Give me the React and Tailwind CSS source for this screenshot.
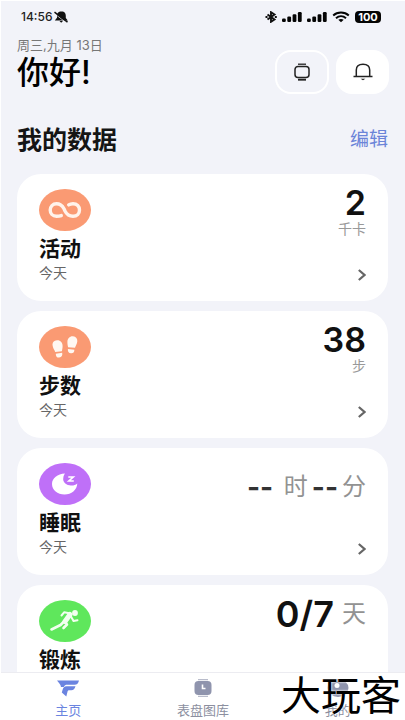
import React from 'react';

function MutedBell() {
  return (
    <svg className="h-3 w-4" viewBox="0 0 16 12" aria-hidden="true">
      <path d="M8.500.5C5 .5 4 2.600 4 4.800v2L1.800 9.500h13L12.800 7V5c0-2.500-1-4.500-4.300-4.500z" fill="#111" />
      <path d="M6.500 10h3.500l-1.800 1.800z" fill="#111" />
      <path d="M1.500 2.600l12.500 9.600" stroke="#f2f3f9" strokeWidth="0.800" />
      <path d="M1.500 1.200l13 10" stroke="#111" strokeWidth="1.500" />
    </svg>
  );
}

function BluetoothIcon() {
  return (
    <svg className="h-3 w-3" viewBox="0 0 12 12" fill="none" stroke="#111" strokeWidth="1.900" aria-hidden="true">
      <path d="M2.500 3.500l7 5L6 10.800V1.200l3.500 2.300-7 5" />
      <path d="M.5 6h2M9.800 6h2" />
    </svg>
  );
}

function SignalIcon() {
  return (
    <svg className="h-3 w-5" viewBox="0 0 20 12" fill="#050505" aria-hidden="true">
      <rect x="0" y="7.500" width="3.800" height="3.500" rx="1.200" />
      <rect x="5.300" y="5.500" width="3.800" height="5.500" rx="1.200" />
      <rect x="10.600" y="3.200" width="3.800" height="7.800" rx="1.200" />
      <rect x="15.900" y="1" width="3.800" height="10" rx="1.200" />
    </svg>
  );
}

function WifiIcon() {
  return (
    <svg className="h-3 w-[18px]" viewBox="0 0 18 12" fill="none" stroke="#050505" aria-hidden="true">
      <path d="M1.200 4.500C5.500.6 12.500.6 16.800 4.500" strokeWidth="2" />
      <path d="M4 7.200c3-2.600 7-2.600 10 0" strokeWidth="2" />
      <path d="M6.300 8.800C8 7.700 10 7.700 11.700 8.800L9 11.300z" fill="#050505" stroke="none" />
    </svg>
  );
}

function WatchIcon() {
  return (
    <svg className="h-[18px] w-[18px]" viewBox="0 0 18 18" fill="none" stroke="#222" strokeWidth="1.500" aria-hidden="true">
      <rect x="2" y="3.500" width="14" height="11" rx="3" />
      <path d="M5 1.200h8" strokeWidth="1.300" />
      <path d="M5 16.700h8" strokeWidth="1.900" />
    </svg>
  );
}

function BellIcon() {
  return (
    <svg className="h-[18px] w-5" viewBox="0 0 20 18" fill="none" stroke="#222" strokeWidth="1.500" aria-hidden="true">
      <path d="M.5 13.500h19M3.300 13.300V7C3.300 3.400 6 1.200 10 1.200S16.700 3.400 16.700 7v6.300" />
      <path d="M7.600 15.800h4.800L10 17.300z" fill="#222" stroke="none" />
    </svg>
  );
}

function InfinityIcon() {
  return (
    <svg className="h-[42px] w-[52px]" viewBox="0 0 52 42" fill="none" stroke="#fff3eb" strokeWidth="3.400" strokeLinecap="round" aria-hidden="true">
      <path d="M22.300 26.600C20.500 27.300 19.400 27.300 17.500 27.300c-4 0-6.300-3-6.300-6.300s2.500-6.300 6.300-6.300c3.500 0 5.700 1.700 7.500 5l1 2.300c1.800 3.500 4.500 5.300 8 5.300 4 0 6.500-2.800 6.500-6.300s-2.500-6.300-6.500-6.300c-1.800 0-3 .3-4.300 1.200" />
    </svg>
  );
}

function StepsIcon() {
  return (
    <svg className="h-[42px] w-[52px]" viewBox="0 0 52 42" fill="#fff8f2" aria-hidden="true">
      <path d="M13.600 19.500c-.4-3 1.400-5 4.400-5.200 3.500-.2 5.600 2.500 5.600 5.700 0 2.200-.4 3.500-.7 5.200l-6.700.7c-.8-2.200-2.300-3.600-2.600-6.400z" />
      <path d="M16.800 27.700l6.400-.9c.5 2.500-.5 4.500-3 4.800-2.200.2-3.400-1.300-3.400-3.900z" />
      <path d="M28.400 16c0-3.400 2.200-6 5.600-5.800 3 .2 4.600 2.400 4.300 5.300-.3 2.500-1.600 4-2.300 6.300l-6.900-.6c-.4-1.900-.7-3-.7-5.200z" />
      <path d="M28.900 22.900l6.500.8c0 2.500-1.300 3.700-3.400 3.500-2.400-.2-3.400-1.800-3.100-4.300z" />
    </svg>
  );
}

function SleepIcon() {
  return (
    <svg className="h-[42px] w-[52px]" viewBox="0 0 52 42" aria-hidden="true">
      <path d="M26 10.600c-7.500.3-13 4.700-13 10.400C13 27 18.500 31.500 25.500 31.500S38 27 38.300 20.500c-2.400 2-5 2.500-7.800 1.800-4.600-1-6.800-4-6.200-7.400.2-1.700.7-3 1.700-4.300z" fill="#fff" />
      <path d="M29.300 14h5l-4.500 4h5" fill="none" stroke="#fff" strokeWidth="1.600" />
    </svg>
  );
}

function RunnerIcon() {
  return (
    <svg className="h-[42px] w-[52px]" viewBox="0 0 52 42" fill="none" stroke="#f2fff0" strokeLinecap="round" strokeLinejoin="round" aria-hidden="true">
      <circle cx="36" cy="13" r="2.900" fill="#f2fff0" stroke="none" />
      <path d="M22.500 15.500l2.800-3.300 6 1.300" strokeWidth="2" />
      <path d="M31 14.500l-5 7" strokeWidth="5" />
      <path d="M32 16.500l2.500 4.500 4-.8" strokeWidth="2" />
      <path d="M25 21.500L21.500 25 12.500 29.500" strokeWidth="2.600" />
      <path d="M26.500 22.500l1.500 2-3.500 3.500" strokeWidth="2.600" />
    </svg>
  );
}

function Chevron() {
  return (
    <svg className="h-3 w-2" viewBox="0 0 8 12" fill="none" stroke="#666" strokeWidth="2.200" aria-hidden="true">
      <path d="M.8 1l5.700 5-5.700 5" />
    </svg>
  );
}

function HomeIcon() {
  return (
    <svg className="h-[18px] w-6" viewBox="0 0 24 18" fill="#6b84e0" aria-hidden="true">
      <path d="M1 1.500h22c-.6 2.800-2 4.300-4.500 4.300h-7.300c-1.700 0-2.700.6-3.400 2.200H5C4.500 5.500 3.500 4.500 1 1.500z" />
      <path d="M10.500 7.300h9c-.8 2.700-2 4-4.200 4h-2.200c-1 0-1.300.5-1.600 1.500l-1.200 4.700-4.500-4 .8-2.700c.6-2.200 1.600-3.500 3.900-3.500z" />
    </svg>
  );
}

function FacesIcon() {
  return (
    <svg className="h-[18px] w-6" viewBox="0 0 24 18" aria-hidden="true">
      <path d="M7 0h10v1.300H7zM7 16.700h10V18H7z" fill="#b9bccb" />
      <rect x="3.500" y="2" width="17" height="14" rx="4" fill="#8f94ad" />
      <path d="M11.500 5.500v4h3" fill="none" stroke="#fff" strokeWidth="1.600" />
    </svg>
  );
}

function ProfileIcon() {
  return (
    <svg className="h-[18px] w-6" viewBox="0 0 24 18" aria-hidden="true">
      <ellipse cx="12" cy="9" rx="10.500" ry="9" fill="#8f94ad" />
      <circle cx="11" cy="6.500" r="2.500" fill="#fff" />
    </svg>
  );
}

function Unit({ children }) {
  return <span className="text-2xl leading-7 text-[#929292]">{children}</span>;
}

function Card({ title, color, icon, children }) {
  return (
    <article className="flex h-[127px] shrink-0 justify-between rounded-3xl bg-white pt-[15px] pr-[22px] pb-4 pl-[22px]">
      <div>
        <div className={`h-[42px] w-[52px] rounded-[50%] ${color}`}>{icon}</div>
        <h3 className="mt-1 text-[21px] leading-7 font-bold text-[#111]">{title}</h3>
        <p className="text-sm leading-5 text-[#666]">今天</p>
      </div>
      <div className="flex flex-col items-end justify-between">
        {children}
        <button type="button" aria-label={title} className="flex h-5 items-center">
          <Chevron />
        </button>
      </div>
    </article>
  );
}

function Stat({ value, unit }) {
  return (
    <div className="flex flex-col items-end">
      <span className="text-[34px] leading-7 font-semibold text-[#111]">{value}</span>
      <span className="text-sm leading-6 text-[#999]">{unit}</span>
    </div>
  );
}

function Tab({ label, icon, active }) {
  return (
    <a href="#" className={`flex flex-1 flex-col items-center gap-1 text-[13px] leading-[18px] ${active ? 'text-[#6b84e0]' : 'text-[#8c8f9f]'}`}>
      {icon}
      {label}
    </a>
  );
}

export default function App() {
  return (
    <div className="relative flex h-screen flex-col overflow-hidden border-t border-l border-white bg-[#f2f3f9] font-['Inter','Noto_Sans_CJK_SC',sans-serif]">
      <div className="flex h-8 shrink-0 items-center justify-between pr-6 pl-5">
        <div className="flex items-center gap-px text-xs font-medium text-[#222]">
          <span>14:56</span>
          <MutedBell />
        </div>
        <div className="flex items-center gap-[5px]">
          <BluetoothIcon />
          <SignalIcon />
          <SignalIcon />
          <WifiIcon />
          <span className="flex h-3 w-[26px] items-center justify-center rounded bg-[#050505] text-[11px] font-bold text-white">100</span>
        </div>
      </div>

      <header className="flex shrink-0 items-start justify-between px-4">
        <div>
          <p className="text-[13px] leading-6 text-[#777]">周三,九月 13日</p>
          <h1 className="text-[32px] leading-8 font-medium text-black">你好!</h1>
        </div>
        <div className="flex gap-[7px] pt-[17px]">
          <button type="button" aria-label="手表" className="flex h-[44px] w-[54px] items-center justify-center rounded-2xl border-2 border-white">
            <WatchIcon />
          </button>
          <button type="button" aria-label="通知" className="flex h-[44px] w-[53px] items-center justify-center rounded-2xl bg-white">
            <BellIcon />
          </button>
        </div>
      </header>

      <main className="flex min-h-0 flex-1 flex-col overflow-hidden pr-[17px] pl-4">
        <div className="mt-[30px] mb-[18px] flex shrink-0 items-center justify-between">
          <h2 className="text-[25px] leading-8 font-bold text-[#151515]">我的数据</h2>
          <button type="button" className="text-[19px] leading-8 text-[#6b84d8]">编辑</button>
        </div>
        <div className="flex flex-col gap-[10px]">
          <Card title="活动" color="bg-[#fa9a73]" icon={<InfinityIcon />}>
            <Stat value="2" unit="千卡" />
          </Card>
          <Card title="步数" color="bg-[#fa9a73]" icon={<StepsIcon />}>
            <Stat value="38" unit="步" />
          </Card>
          <Card title="睡眠" color="bg-[#bf70f8]" icon={<SleepIcon />}>
            <div className="flex items-center gap-1 pt-2.5">
              <span className="text-[28px] leading-7 font-bold whitespace-pre text-[#333]">{'-- '}</span>
              <Unit>时</Unit>
              <span className="text-[28px] leading-7 font-bold text-[#333]">--</span>
              <Unit>分</Unit>
            </div>
          </Card>
          <Card title="锻炼" color="bg-[#5fe75c]" icon={<RunnerIcon />}>
            <div className="flex items-center gap-2">
              <span className="text-[36px] leading-7 font-semibold text-[#111]">0/7</span>
              <Unit>天</Unit>
            </div>
          </Card>
        </div>
      </main>

      <nav className="flex h-12 shrink-0 border-t border-[#ececf1] bg-white pt-1.5">
        <Tab label="主页" icon={<HomeIcon />} active />
        <Tab label="表盘图库" icon={<FacesIcon />} />
        <Tab label="我的" icon={<ProfileIcon />} />
      </nav>

      <div className="pointer-events-none absolute right-1 bottom-1 text-[40px] leading-10 text-black [text-shadow:0_0_2px_#fff,0_0_2px_#fff]">大玩客</div>
    </div>
  );
}
